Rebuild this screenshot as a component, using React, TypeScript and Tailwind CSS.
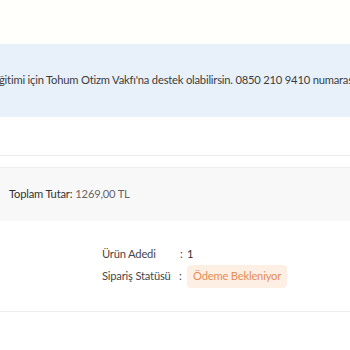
export default function App() {
  const rows = [
    { label: 'Ürün Adedi', value: '1' },
  ];

  return (
    <div className="w-[350px] h-[350px] overflow-hidden bg-white font-['Lato','Liberation_Sans',sans-serif] text-[11.2px] tracking-[-0.2px]">
      <div className="h-[44px] bg-[#fffffc]" />

      <div className="h-[73px] bg-[#e8f1fa] flex items-center overflow-hidden">
        <p className="whitespace-nowrap text-[#3d3d3d] -ml-[1px]">
          ğitimi için Tohum Otizm Vakfı'na destek olabilirsin. 0850 210 9410 numarasına TOHUM yazıp SMS gönder.
        </p>
      </div>

      <div className="h-[39px] border-b border-[#ececec]" />
      <div className="h-[12px] border-b border-[#eeeeee]" />

      <div className="h-[53px] bg-[#f8f8f8] flex items-center pl-[9px]">
        <span className="text-[#333]">Toplam Tutar:</span>
        <span className="text-[#666] ml-[3px]">1269,00 TL</span>
      </div>

      <div className="border-b border-[#ececec] pt-[23px] pb-[23px] pl-[102px]">
        {rows.map((r) => (
          <div key={r.label} className="flex items-center h-[20px] whitespace-nowrap">
            <span className="w-[78px] text-[#484848]">{r.label}</span>
            <span className="text-[#484848] w-[7px]">:</span>
            <span className="text-[#333]">{r.value}</span>
          </div>
        ))}
        <div className="flex items-center h-[23px] mt-[1px] whitespace-nowrap">
          <span className="w-[77px] text-[#484848]">Sipariş Statüsü</span>
          <span className="text-[#484848] w-[8px]">:</span>
          <span className="h-[23px] px-[6px] flex items-center rounded-[4px] bg-[#fdefe4] text-[#e58d57]">
            Ödeme Bekleniyor
          </span>
        </div>
      </div>
    </div>
  );
}
